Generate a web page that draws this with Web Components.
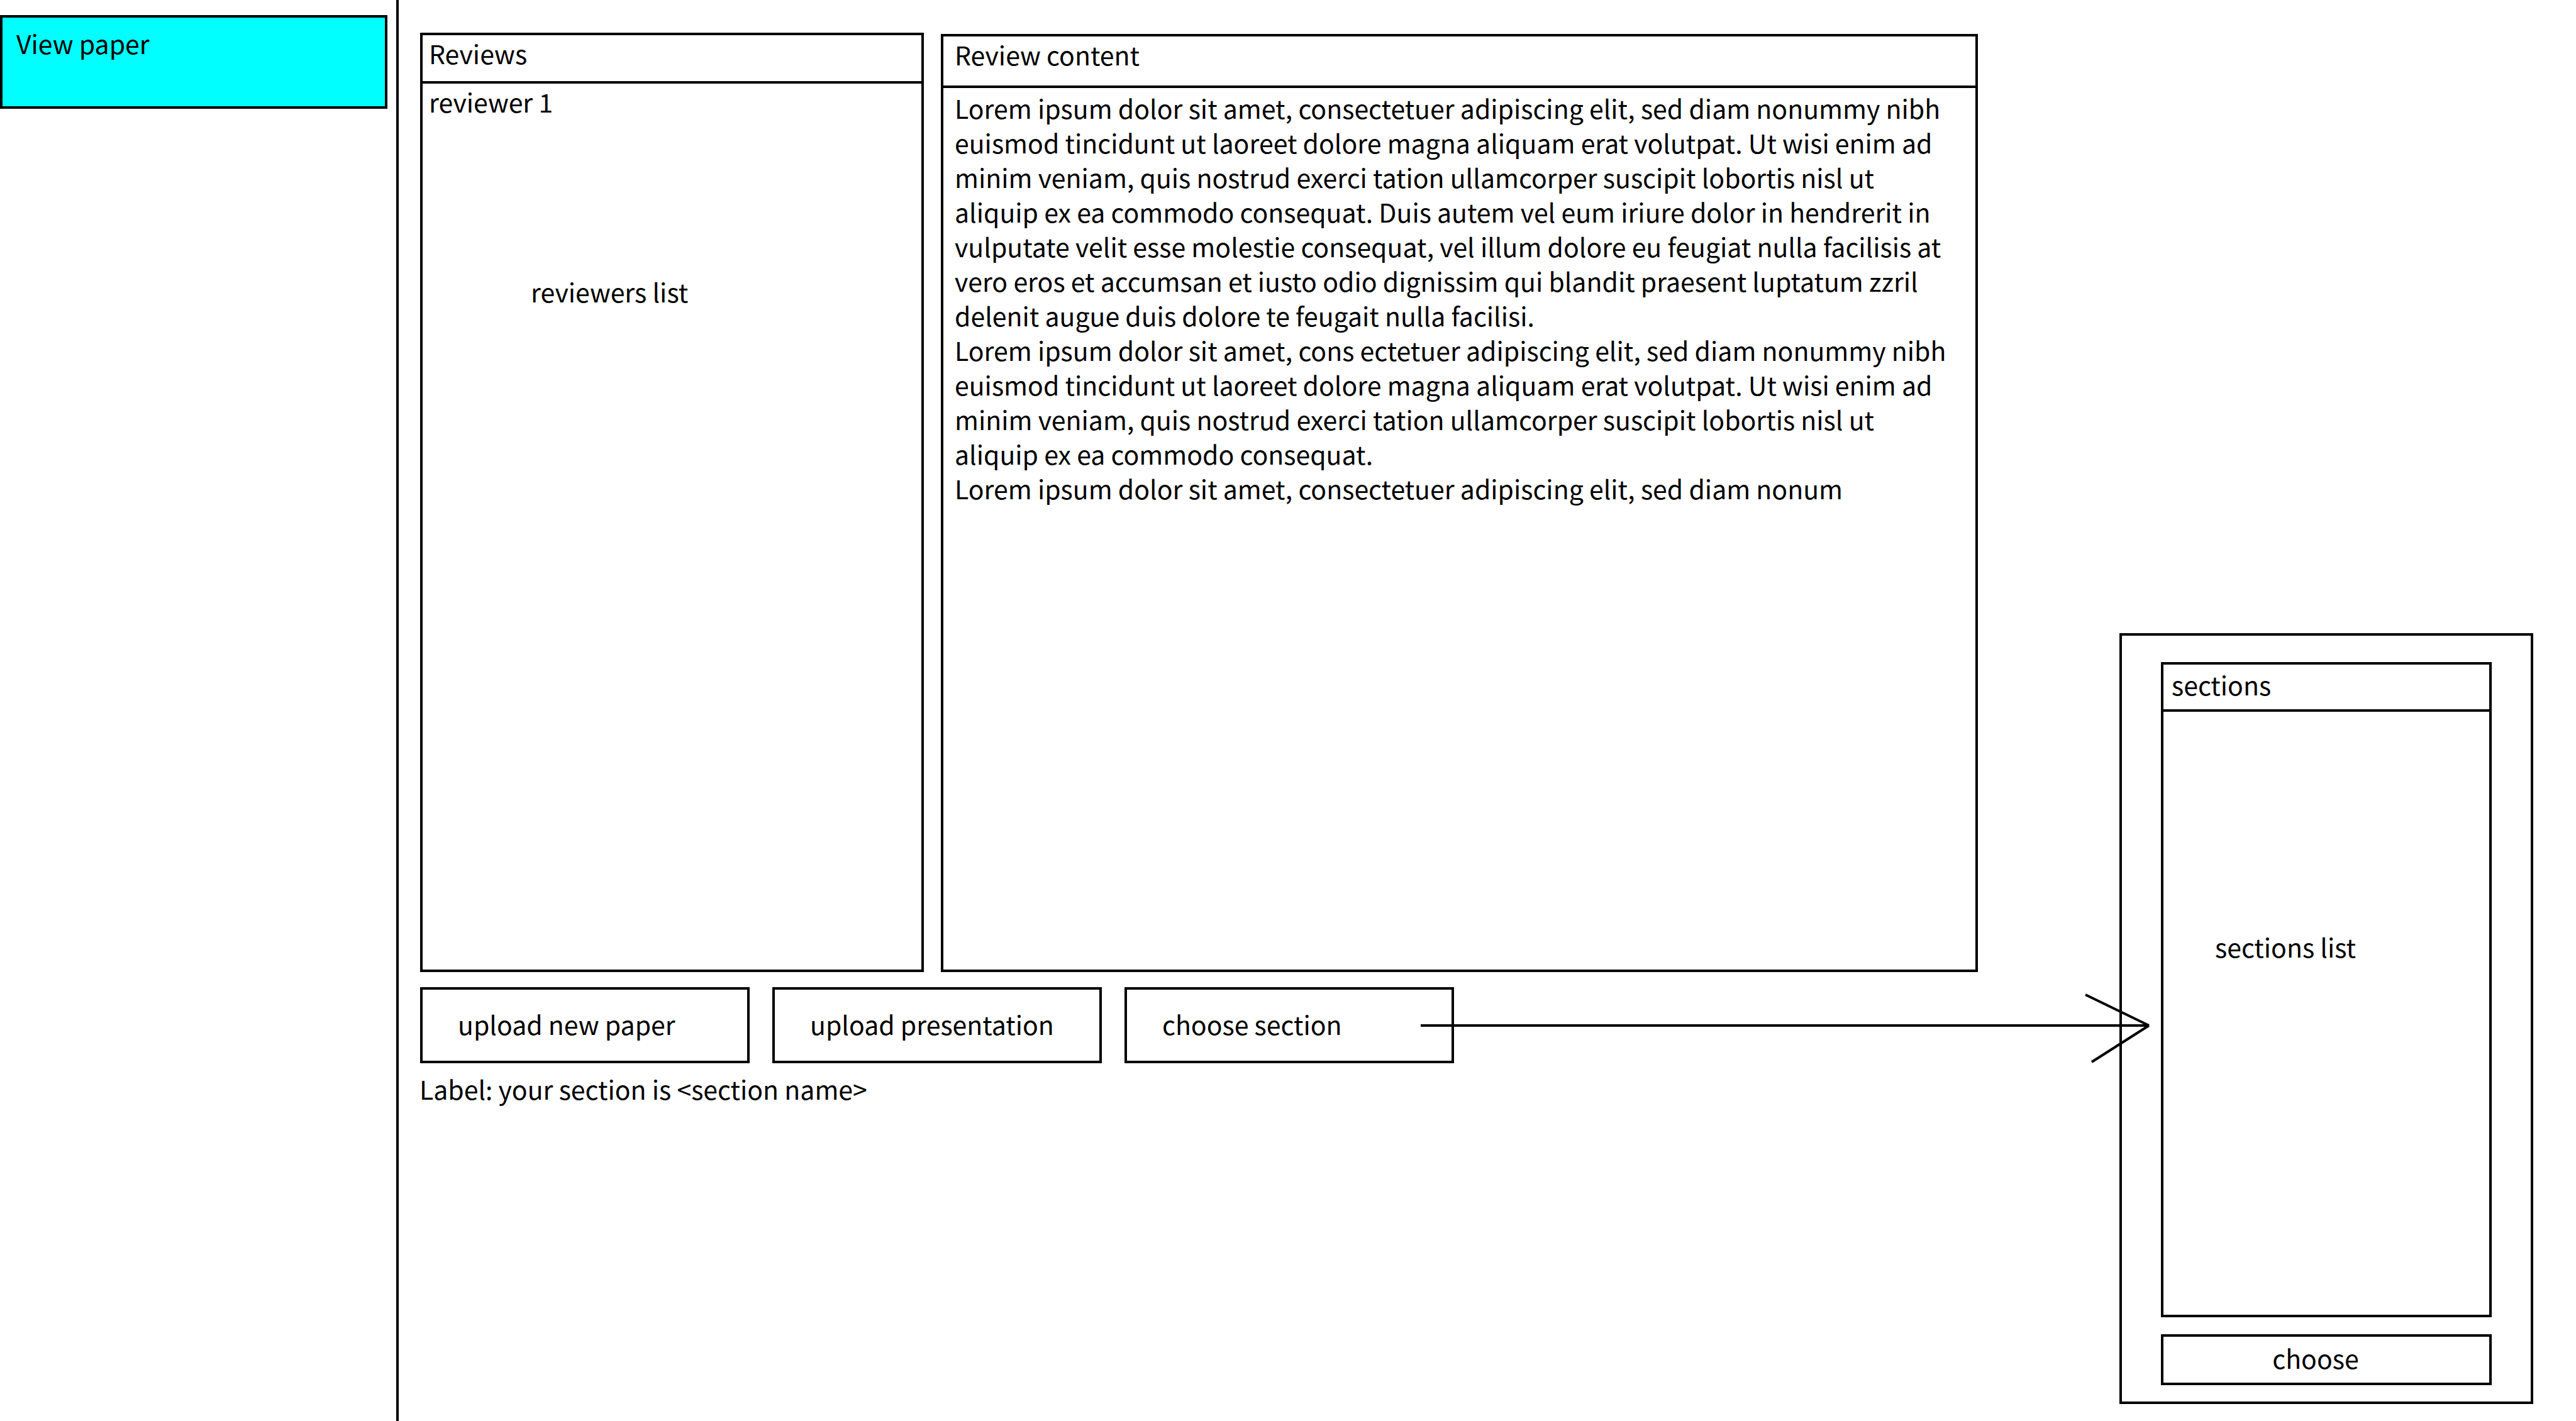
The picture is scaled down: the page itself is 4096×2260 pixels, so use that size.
<!DOCTYPE html>
<html lang="en">
<head>
<meta charset="utf-8">
<title>View paper</title>
<style>
  html, body { margin: 0; height: 100%; background: #fff; }
  body {
    --line: 4px solid #000;
    color: #000;
    font-family: "Noto Sans CJK SC", "Open Sans", sans-serif;
    font-size: 41px;
    line-height: 55px;
  }
</style>
</head>
<body>
<paper-app></paper-app>

<template id="paper-app">
  <style>
    :host { display: grid; grid-template-columns: 634px minmax(0, 1fr) 658px; padding-right: 68px; min-height: 100vh; box-sizing: border-box; }
    nav { border-right: var(--line); padding: 24px 14px 0 0; }
    main { display: flex; flex-direction: column; padding: 52px 0 501px 34px; }
    .panels { flex: 1; display: grid; grid-template-columns: 801fr 1649fr; gap: 27px; padding-right: 225px; }
    .content { margin-top: 2px; --head: 78px; --inset: 18px; }
    ul, p { margin: 0; padding: 0; list-style: none; }
    .hint { margin: 247px 0 0 162px; }
    .review { padding: 3px 28px 0 0; }
    .actions { display: flex; gap: 36px; margin-top: 24px; }
    .actions flow-arrow { flex: 1; margin: 0 -49px 0 -89px; }
    .label { margin: 13px 0 0 -1px; }
    choose-dialog { margin: 1007px 0 27px; }
  </style>
  <nav><nav-item>View paper</nav-item></nav>
  <main>
    <div class="panels">
      <list-panel>
        <span slot="title">Reviews</span>
        <ul><li>reviewer 1</li></ul>
        <p class="hint">reviewers list</p>
      </list-panel>
      <list-panel class="content">
        <span slot="title">Review content</span>
        <div class="review">
          <p>Lorem ipsum dolor sit amet, consectetuer adipiscing elit, sed diam nonummy nibh euismod tincidunt ut laoreet dolore magna aliquam erat volutpat. Ut wisi enim ad minim veniam, quis nostrud exerci tation ullamcorper suscipit lobortis nisl ut aliquip ex ea commodo consequat. Duis autem vel eum iriure dolor in hendrerit in vulputate velit esse molestie consequat, vel illum dolore eu feugiat nulla facilisis at vero eros et accumsan et iusto odio dignissim qui blandit praesent luptatum zzril delenit augue duis dolore te feugait nulla facilisi.</p>
          <p>Lorem ipsum dolor sit amet, cons ectetuer adipiscing elit, sed diam nonummy nibh euismod tincidunt ut laoreet dolore magna aliquam erat volutpat. Ut wisi enim ad minim veniam, quis nostrud exerci tation ullamcorper suscipit lobortis nisl ut aliquip ex ea commodo consequat.</p>
          <p>Lorem ipsum dolor sit amet, consectetuer adipiscing elit, sed diam nonum</p>
        </div>
      </list-panel>
    </div>
    <div class="actions">
      <action-button>upload new paper</action-button>
      <action-button>upload presentation</action-button>
      <action-button>choose section</action-button>
      <flow-arrow></flow-arrow>
    </div>
    <p class="label">Label: your section is &lt;section name&gt;</p>
  </main>
  <choose-dialog></choose-dialog>
</template>

<template id="nav-item">
  <style>
    :host { display: block; }
    a { display: block; box-sizing: border-box; min-height: 149px; padding: 13px 22px; border: var(--line); background: #0ff; color: inherit; text-decoration: none; }
  </style>
  <a href="#paper"><slot></slot></a>
</template>

<template id="list-panel">
  <style>
    :host { display: flex; flex-direction: column; border: var(--line); }
    header { box-sizing: border-box; min-height: calc(var(--head, 73px) + 4px); padding: var(--head-pad, 1px) 0 0 var(--inset, 10px); border-bottom: var(--line); }
    h2 { margin: 0; font: inherit; }
    .body { flex: 1; padding: 1px 12px 0 var(--inset, 10px); }
  </style>
  <header><h2><slot name="title"></slot></h2></header>
  <div class="body"><slot></slot></div>
</template>

<template id="action-button">
  <style>
    :host { display: block; width: 524px; }
    button { display: block; box-sizing: border-box; width: 100%; padding: var(--pad, 27px 0 31px 56px); border: var(--line); border-radius: 0; background: none; color: inherit; font: inherit; text-align: var(--align, left); white-space: nowrap; }
  </style>
  <button type="button"><slot></slot></button>
</template>

<template id="flow-arrow">
  <style>
    :host { display: flex; align-items: flex-start; position: relative; z-index: 1; pointer-events: none; }
    .shaft { flex: 1; height: 4px; margin-top: 59px; background: #000; }
    svg { display: block; flex: none; }
  </style>
  <div class="shaft"></div>
  <svg width="108" height="121" viewBox="0 0 108 121" fill="none" stroke="#000" stroke-width="4" aria-hidden="true">
    <path d="M0 61H106M5 12L106 61M106 61L15 119"/>
  </svg>
</template>

<template id="choose-dialog">
  <style>
    :host { display: flex; flex-direction: column; gap: 27px; box-sizing: border-box; padding: 42px 62px 26px; border: var(--line); }
    list-panel { flex: 1; --head: 71px; --head-pad: 4px; --inset: 13px; }
    p { margin: 345px 0 0 69px; }
    action-button { width: auto; --pad: 6px 34px 12px 0; --align: center; }
  </style>
  <list-panel>
    <span slot="title">sections</span>
    <p>sections list</p>
  </list-panel>
  <action-button>choose</action-button>
</template>

<script>
  for (const name of ["nav-item", "list-panel", "action-button", "flow-arrow", "choose-dialog", "paper-app"]) {
    customElements.define(name, class extends HTMLElement {
      constructor() {
        super();
        this.attachShadow({ mode: "open" }).append(document.getElementById(name).content.cloneNode(true));
      }
    });
  }
</script>
</body>
</html>
